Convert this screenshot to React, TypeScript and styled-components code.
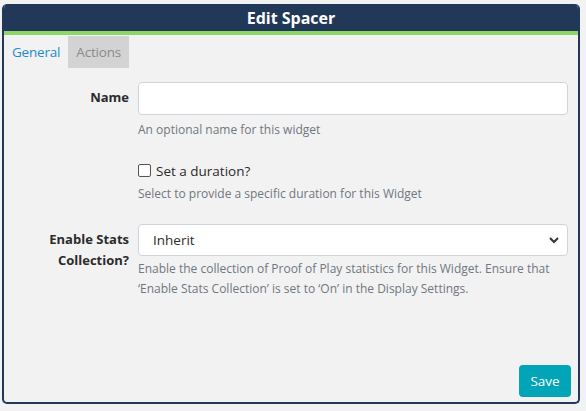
import React from "react";
import styled, { createGlobalStyle } from "styled-components";

const Global = createGlobalStyle`
  html, body { margin: 0; padding: 0; background: #f2f2f2; }
  body { font-family: "Open Sans", "Noto Sans", sans-serif; }
  * { box-sizing: border-box; }
`;

const Page = styled.div`
  padding: 4px 6px 0 2px;
  width: 586px;
  height: 411px;
`;

const Dialog = styled.div`
  width: 578px;
  height: 400px;
  border: 2px solid #213859;
  border-top: none;
  border-radius: 5px;
  background: #f2f2f2;
  display: flex;
  flex-direction: column;
  overflow: hidden;
`;

const Header = styled.div`
  background: #213859;
  height: 27px;
  border-bottom: 4px solid #8cd867;
  box-sizing: content-box;
  color: #fff;
  font-weight: 700;
  font-size: 16px;
  display: flex;
  align-items: center;
  justify-content: center;
  margin: 0 -2px;
`;

const Tabs = styled.div`
  display: flex;
  padding: 1px 0 0 0;
  height: 32px;
`;

const Tab = styled.div<{ $active?: boolean }>`
  padding: 0 8px;
  height: 32px;
  display: flex;
  align-items: center;
  font-size: 13.5px;
  color: ${(p) => (p.$active ? "#1d8acb" : "#8a8a8a")};
  background: ${(p) => (p.$active ? "transparent" : "#d3d3d3")};
  letter-spacing: -0.2px;
`;

const Body = styled.div`
  flex: 1;
  padding: 15px 10px 0 0;
  display: flex;
  flex-direction: column;
`;

const Row = styled.div<{ $mb: number }>`
  display: grid;
  grid-template-columns: 125px 1fr;
  column-gap: 9px;
  margin-bottom: ${(p) => p.$mb}px;
`;

const Label = styled.label`
  font-weight: 700;
  font-size: 13px;
  color: #2b2b2b;
  text-align: right;
  line-height: 21px;
  padding-top: 5px;
`;

const Field = styled.div`
  display: flex;
  flex-direction: column;
`;

const Input = styled.input`
  height: 33px;
  width: 100%;
  border: 1px solid #cfd4da;
  border-radius: 4px;
  background: #fff;
  font: inherit;
  font-size: 13px;
  padding: 0 12px;
  outline: none;
`;

const Select = styled.select`
  height: 32px;
  width: 100%;
  border: 1px solid #cfd4da;
  border-radius: 4px;
  background: #fff;
  font-family: inherit;
  font-size: 13.5px;
  color: #2b2b2b;
  padding: 0 14px;
  appearance: none;
  background-image: url("data:image/svg+xml,%3Csvg xmlns='http://www.w3.org/2000/svg' width='12' height='8' viewBox='0 0 12 8'%3E%3Cpath d='M2 2l4 4 4-4' fill='none' stroke='%23333' stroke-width='2'/%3E%3C/svg%3E");
  background-repeat: no-repeat;
  background-position: right 7px center;
  outline: none;
`;

const Help = styled.div<{ $mt?: number }>`
  font-size: 12px;
  color: #707780;
  margin-top: ${(p) => p.$mt ?? 5}px;
  line-height: 20px;
`;

const CheckLine = styled.label`
  display: flex;
  align-items: center;
  gap: 5px;
  font-size: 13.5px;
  color: #2b2b2b;
  height: 19px;
`;

const Box = styled.span`
  width: 13px;
  height: 13px;
  border: 1px solid #555;
  border-radius: 2px;
  background: #fff;
  display: inline-block;
`;

const Footer = styled.div`
  margin-top: auto;
  display: flex;
  justify-content: flex-end;
  padding: 0 7px 5px 0;
`;

const Button = styled.button`
  background: #02a4b8;
  color: #fff;
  border: none;
  border-radius: 4px;
  height: 32px;
  width: 52px;
  padding: 0;
  font-family: inherit;
  font-size: 13.5px;
`;

export default function App() {
  return (
    <>
      <Global />
      <Page>
        <Dialog>
          <Header>Edit Spacer</Header>
          <Tabs>
            <Tab $active>General</Tab>
            <Tab>Actions</Tab>
          </Tabs>
          <Body>
            <Row $mb={21}>
              <Label>Name</Label>
              <Field>
                <Input />
                <Help>An optional name for this widget</Help>
              </Field>
            </Row>
            <Row $mb={20}>
              <div />
              <Field>
                <CheckLine>
                  <Box />
                  Set a duration?
                </CheckLine>
                <Help $mt={4}>Select to provide a specific duration for this Widget</Help>
              </Field>
            </Row>
            <Row $mb={0}>
              <Label>Enable Stats Collection?</Label>
              <Field>
                <Select defaultValue="inherit">
                  <option value="inherit">Inherit</option>
                </Select>
                <Help $mt={3}>
                  Enable the collection of Proof of Play statistics for this Widget. Ensure that
                  ‘Enable Stats Collection’ is set to ‘On’ in the Display Settings.
                </Help>
              </Field>
            </Row>
          </Body>
          <Footer>
            <Button>Save</Button>
          </Footer>
        </Dialog>
      </Page>
    </>
  );
}
